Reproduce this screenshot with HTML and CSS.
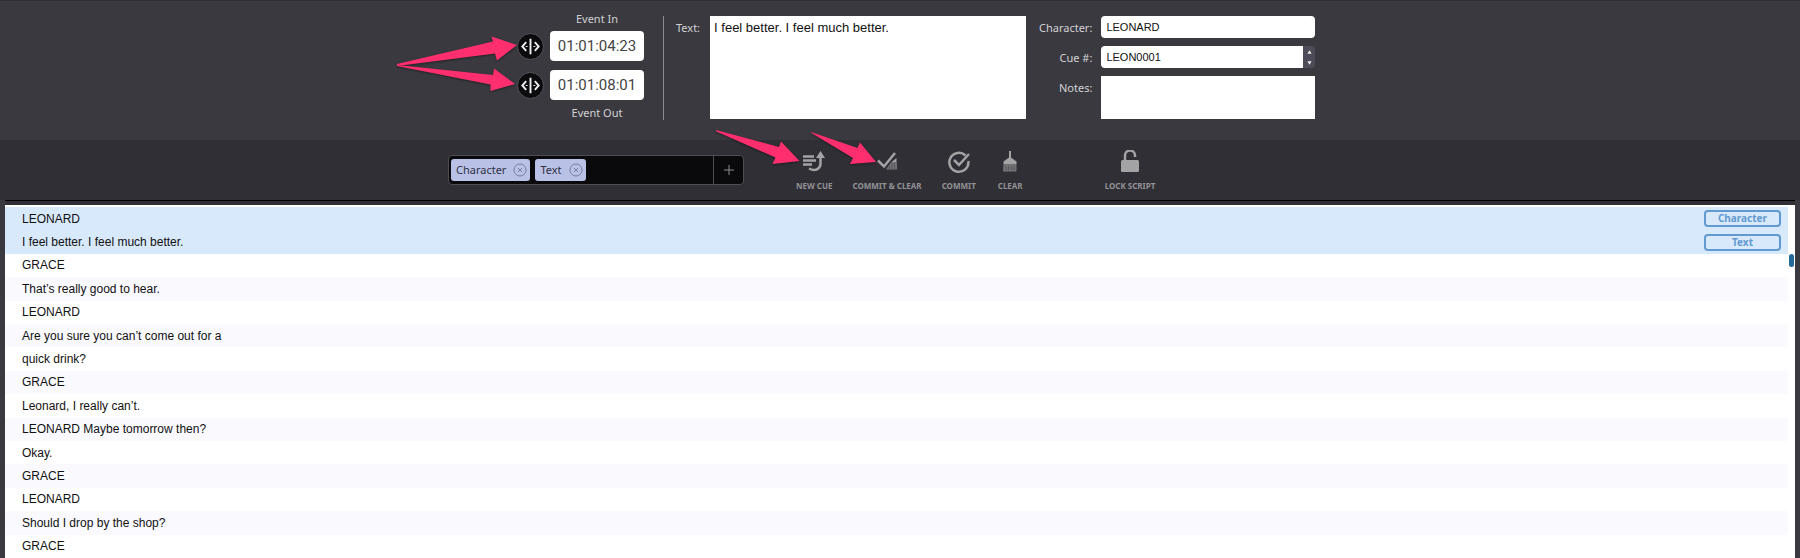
FILE: index.html
```html
<!DOCTYPE html>
<html lang="en">
<head>
    <meta charset="UTF-8">
    <meta name="viewport" content="width=device-width, initial-scale=1.0">
    <title>Cue Editor</title>
    <link rel="stylesheet" href="styles.css">
</head>
<body>
    <header class="cue-panel">
        <div class="timecodes">
            <label for="event-in">Event In</label>
            <div class="timecode-row">
                <button class="capture" aria-label="Capture event in">
                    <svg viewBox="0 0 26 26"><path d="M8.5 8.5 4.5 13l4 4.5M17.5 8.5l4 4.5-4 4.5M13 5v16"/><path class="dots" d="M8 13h2M16 13h2"/></svg>
                </button>
                <input type="text" id="event-in" class="timecode" value="01:01:04:23">
            </div>
            <div class="timecode-row">
                <button class="capture" aria-label="Capture event out">
                    <svg viewBox="0 0 26 26"><path d="M8.5 8.5 4.5 13l4 4.5M17.5 8.5l4 4.5-4 4.5M13 5v16"/><path class="dots" d="M8 13h2M16 13h2"/></svg>
                </button>
                <input type="text" id="event-out" class="timecode" value="01:01:08:01">
            </div>
            <label for="event-out">Event Out</label>
        </div>

        <div class="divider"></div>

        <div class="text-field">
            <label for="cue-text">Text:</label>
            <textarea id="cue-text">I feel better. I feel much better.</textarea>
        </div>

        <div class="details">
            <label for="character">Character:</label>
            <input type="text" id="character" value="LEONARD">
            <label for="cue-number">Cue #:</label>
            <div class="stepper">
                <input type="text" id="cue-number" value="LEON0001">
                <div class="stepper-buttons">
                    <button aria-label="Next cue"><svg viewBox="0 0 6 4"><path d="M3 0l2.5 4h-5z"/></svg></button>
                    <button aria-label="Previous cue"><svg viewBox="0 0 6 4"><path d="M3 4L.5 0h5z"/></svg></button>
                </div>
            </div>
            <label for="notes">Notes:</label>
            <textarea id="notes"></textarea>
        </div>
    </header>

    <nav class="toolbar">
        <div class="tokens">
            <span class="token">Character
                <button aria-label="Remove Character"><svg viewBox="0 0 14 14"><circle cx="7" cy="7" r="6"/><path d="M5 5l4 4M9 5l-4 4"/></svg></button>
            </span>
            <span class="token">Text
                <button aria-label="Remove Text"><svg viewBox="0 0 14 14"><circle cx="7" cy="7" r="6"/><path d="M5 5l4 4M9 5l-4 4"/></svg></button>
            </span>
            <button class="add-token" aria-label="Add"><svg viewBox="0 0 10 10"><path d="M5 0v10M0 5h10"/></svg></button>
        </div>

        <div class="actions">
            <button class="action">
                <svg viewBox="0 0 24 24"><path class="line" d="M1 6.500h11M1 10.500h13M1 14.500h9M7 18.500c7 3.500 11.500 0 11.500-5V6"/><path d="M18.500 1l4.500 7h-9z"/></svg>
                NEW CUE
            </button>
            <button class="action">
                <svg viewBox="0 0 24 24"><path class="line" d="M3 10.500l6 6L20 3"/><path d="M16 12.500L21.500 8v4.500z"/><path class="dim" d="M11 19.500l5-7h6v7z"/><path class="gaps" d="M14.500 16v3.500M17 13.500v6M19.500 13.500v6"/></svg>
                COMMIT &amp; CLEAR
            </button>
            <button class="action">
                <svg viewBox="0 0 24 24"><path class="line" d="M18.500 5.500A9.500 9.500 0 1 0 21.300 11"/><path class="line" d="M7 10l5 5L22 4"/></svg>
                COMMIT
            </button>
            <button class="action clear">
                <svg viewBox="0 0 24 24"><path d="M11 1h2v6.500l5.500 4v3h-13v-3l5.500-4z"/><path class="dim" d="M5.500 14.500h13V21l-1 1-1-1-1.500 1-1-1-1.500 1-1.500-1-1.500 1-1-1-1.500 1-2-1z"/><path class="gaps" d="M8 16v4M10.500 16v4M13.500 16v4M16 16v4"/></svg>
                CLEAR
            </button>
            <button class="action lock">
                <svg viewBox="0 0 24 24"><path class="line" d="M7 11V5.500a5 5 0 0 1 10 0v1.500"/><rect x="3" y="10" width="18" height="12" rx="1.500"/></svg>
                LOCK SCRIPT
            </button>
        </div>
    </nav>

    <main class="script">
        <ul class="lines">
            <li class="selected">LEONARD <span class="tag">Character</span></li>
            <li class="selected">I feel better. I feel much better. <span class="tag">Text</span></li>
            <li>GRACE</li>
            <li>That’s really good to hear.</li>
            <li>LEONARD</li>
            <li>Are you sure you can’t come out for a</li>
            <li>quick drink?</li>
            <li>GRACE</li>
            <li>Leonard, I really can’t.</li>
            <li>LEONARD Maybe tomorrow then?</li>
            <li>Okay.</li>
            <li>GRACE</li>
            <li>LEONARD</li>
            <li>Should I drop by the shop?</li>
            <li>GRACE</li>
        </ul>
        <div class="scrollbar"><div class="thumb"></div></div>
    </main>

    <!-- Pointer arrows over the panel -->
    <svg class="arrows" viewBox="0 0 490 170" width="490" height="170">
        <path d="M1 64L97 41.500l-1.500-5L121 45l-20 15.500-2-7L1 66z"/>
        <path d="M1 65l96 10 1-6.500L119 84l-24.500 7v-6.500L1 66z"/>
        <path d="M320 130l63 17 2-5.500 18.500 19.500-27 3 3-6.500-59-26z"/>
        <path d="M415 132l46.500 16 2.500-5.500 16 19.500-26 2 3-6-41.500-25z"/>
    </svg>
</body>
</html>
```

FILE: styles.css
```css
* {
    margin: 0;
    padding: 0;
    box-sizing: border-box;
}

body {
    font-family: "Noto Sans", sans-serif;
    font-size: 11px;
    line-height: 16px;
    background-color: #3a393f;
    color: #d2d2d5;
    display: flex;
    flex-direction: column;
    min-height: 100vh;
    position: relative;
}

button {
    font: inherit;
    color: inherit;
    background: none;
    border: none;
    cursor: pointer;
}

input, textarea {
    font-family: "Liberation Sans", Arial, sans-serif;
    color: #111;
    background-color: #fff;
    border: none;
    display: block;
    outline: none;
    resize: none;
    min-width: 0;
}

svg {
    display: block;
}

/* Cue panel */
.cue-panel {
    display: flex;
    align-items: flex-start;
    padding: 15px 24px 19px 517px;
    border-top: 1px solid #302f35;
}

.timecodes {
    display: flex;
    flex-direction: column;
    align-items: flex-end;
    gap: 9px;
    margin-top: -5px;
}

.timecodes label {
    width: 94px;
    text-align: center;
}

.timecodes label:first-child {
    margin-bottom: -5px;
}

.timecodes label:last-child {
    margin-top: -4px;
}

.timecode-row {
    display: flex;
    align-items: center;
    gap: 6px;
}

.capture {
    width: 27px;
    height: 27px;
    border-radius: 50%;
    border: 1px solid #55545a;
    background-color: #0b0b0d;
}

.capture svg {
    fill: none;
    stroke: #eee;
    stroke-width: 2;
}

.capture .dots {
    stroke-width: 1;
}

.timecode {
    width: 94px;
    height: 30px;
    border-radius: 4px;
    text-align: center;
    font-family: Roboto, sans-serif;
    font-size: 15px;
    color: #444;
}

.divider {
    width: 1px;
    height: 104px;
    margin: 0 12px 0 19px;
    background-color: #8a898e;
}

.text-field {
    display: flex;
    flex: 0 1 350px;
    gap: 10px;
}

.text-field label {
    padding-top: 4px;
}

.text-field textarea {
    flex: 1;
    height: 103px;
    padding: 4px;
    font-size: 13px;
}

.details {
    display: grid;
    grid-template-columns: auto minmax(100px, 214px);
    column-gap: 9px;
    row-gap: 8px;
    margin-left: 13px;
}

.details label {
    text-align: right;
    padding-top: 4px;
}

.details input {
    width: 100%;
    height: 22px;
    padding: 0 5px;
    border-radius: 4px;
    font-size: 11px;
}

.details textarea {
    width: 100%;
    height: 43px;
    padding: 4px;
}

.stepper {
    display: flex;
}

.stepper input {
    border-radius: 4px 0 0 4px;
}

.stepper-buttons {
    display: flex;
    flex-direction: column;
    background-color: #4d4c58;
    border-radius: 0 4px 4px 0;
}

.stepper-buttons button {
    width: 12px;
    height: 11px;
    display: flex;
    align-items: center;
    justify-content: center;
}

.stepper-buttons svg {
    width: 5px;
    height: 4px;
    fill: #eee;
}

/* Toolbar */
.toolbar {
    display: flex;
    align-items: center;
    height: 60px;
    padding: 0 24px 0 448px;
    background-color: #302f35;
}

.tokens {
    display: flex;
    align-items: center;
    gap: 5px;
    width: 296px;
    height: 30px;
    padding-left: 2px;
    background-color: #0a0a0d;
    border: 1px solid #4e4d53;
    border-radius: 4px;
}

.token {
    display: flex;
    align-items: center;
    gap: 7px;
    height: 22px;
    padding: 0 3px 0 5px;
    border-radius: 3px;
    background-color: #b9c2e6;
    color: #303145;
}

.token svg {
    width: 14px;
    height: 14px;
    fill: none;
    stroke: #777d98;
}

.add-token {
    display: flex;
    align-items: center;
    justify-content: center;
    width: 30px;
    height: 28px;
    margin-left: auto;
    border-left: 1px solid #4e4d53;
}

.add-token svg {
    width: 10px;
    height: 10px;
    stroke: #8b8b8e;
}

.actions {
    display: flex;
    margin-left: 52px;
    gap: 20px;
}

.action {
    display: flex;
    flex-direction: column;
    align-items: center;
    gap: 4px;
    padding-top: 3px;
    font-size: 8px;
    font-weight: bold;
    line-height: 16px;
    color: #929296;
    white-space: nowrap;
}

.action.clear {
    margin-left: 2px;
}

.action.lock {
    margin-left: 62px;
}

.action svg {
    width: 24px;
    height: 24px;
    fill: #a3a3a5;
}

.action .line {
    fill: none;
    stroke: #a3a3a5;
    stroke-width: 2.5;
}

.action .dim {
    fill: #737377;
}

.action .gaps {
    stroke: #56555a;
    stroke-width: 1;
}

/* Script lines */
.script {
    flex: 1;
    display: flex;
    margin: 5px 5px 0;
    padding-top: 2px;
    background-color: #fff;
    box-shadow: 0 -4px #302f35, 0 -5px #000;
}

.lines {
    flex: 1;
    display: grid;
    grid-auto-rows: 1fr;
    list-style: none;
    font-family: "Liberation Sans", Arial, sans-serif;
    font-size: 12px;
    color: #111;
}

.lines li {
    display: flex;
    align-items: center;
    justify-content: space-between;
    padding: 0 7px 0 17px;
}

.lines li:nth-child(even) {
    background-color: #f9f9fe;
}

.lines li.selected {
    background-color: #d8e9fc;
}

.tag {
    width: 77px;
    height: 17px;
    border: 2px solid #6299d0;
    border-radius: 4px;
    font-family: "Noto Sans", sans-serif;
    font-size: 10px;
    font-weight: bold;
    line-height: 13px;
    text-align: center;
    color: #6299d0;
}

.scrollbar {
    width: 7px;
    padding: 47px 1px 0;
}

.thumb {
    height: 13px;
    border-radius: 3px;
    background-color: #236a98;
}

.arrows {
    position: absolute;
    top: 0;
    left: 396px;
    fill: #ff2e6e;
    pointer-events: none;
    filter: drop-shadow(0 1px 1px rgba(0, 0, 0, 0.4));
}
```
